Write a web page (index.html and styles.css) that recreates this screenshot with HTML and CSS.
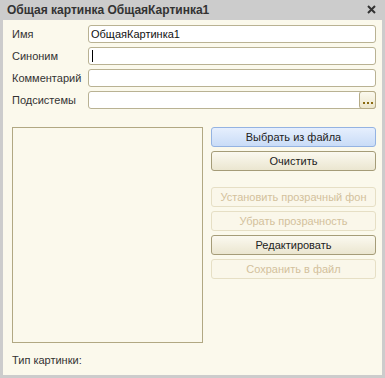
FILE: index.html
```html
<!DOCTYPE html>
<html>
    <head>
        <meta charset="utf-8" />
        <title>Общая картинка ОбщаяКартинка1</title>
        <link rel="stylesheet" href="styles.css">
    </head>

    <body>
        <div class="m-win">
            <div class="head">
                <span class="ttl">Общая картинка ОбщаяКартинка1</span>
                <svg class="close" width="9" height="9" viewBox="0 0 9 9">
                    <path d="M1 1L8 8M8 1L1 8" stroke="#333" stroke-width="2" fill="none" />
                </svg>
            </div>

            <div class="body">
                <div class="props">
                    <label>Имя</label>
                    <div class="fld">ОбщаяКартинка1</div>
                    <label>Синоним</label>
                    <div class="fld"><i class="caret"></i></div>
                    <label>Комментарий</label>
                    <div class="fld"></div>
                    <label>Подсистемы</label>
                    <div class="fld fld-sel">
                        <span class="val"></span>
                        <span class="more">
                            <svg width="11" height="3" viewBox="0 0 11 3">
                                <rect x="0" y="0" width="2" height="2" fill="#8a6a10" />
                                <rect x="4" y="0" width="2" height="2" fill="#8a6a10" />
                                <rect x="8" y="0" width="2" height="2" fill="#8a6a10" />
                            </svg>
                        </span>
                    </div>
                </div>

                <div class="pic">
                    <div class="view"></div>
                    <div class="btns">
                        <button class="btn btn-def">Выбрать из файла</button>
                        <button class="btn">Очистить</button>
                        <button class="btn gap" disabled>Установить прозрачный фон</button>
                        <button class="btn" disabled>Убрать прозрачность</button>
                        <button class="btn">Редактировать</button>
                        <button class="btn" disabled>Сохранить в файл</button>
                    </div>
                </div>

                <p class="type">Тип картинки:</p>
            </div>
        </div>
    </body>
</html>
```

FILE: styles.css
```css
*{margin:0;padding:0;box-sizing:border-box;}
body{background:#cccccc;font:11px "Liberation Sans",Arial,sans-serif;color:#333;}

.m-win{width:385px;height:378px;display:flex;flex-direction:column;background:#cccccc;}
.m-win .head{height:20px;display:flex;align-items:center;justify-content:space-between;padding:0 9px 1px 7px;}
.m-win .ttl{font-weight:bold;font-size:12px;color:#333;}
.m-win .close{display:block;}

.m-win .body{flex:1;margin:0 3px 3px;background:#fbf9ec;padding:5px 6px 0 9px;display:flex;flex-direction:column;}

.props{display:grid;grid-template-columns:76px 1fr;grid-auto-rows:18px;row-gap:4px;align-items:center;}
.props label{color:#333;white-space:nowrap;}
.props .fld{height:18px;border:1px solid #b9b293;border-radius:3px;background:#fff;padding:0 2px;line-height:16px;color:#111;display:flex;align-items:center;}
.props .caret{display:block;width:1px;height:12px;background:#000;margin-left:1px;}
.props .fld-sel{padding-right:0;}
.props .fld-sel .val{flex:1;}
.props .more{width:17px;height:18px;margin:-1px -1px -1px 0;border:1px solid #b5ab86;border-radius:3px;background:linear-gradient(#fbf9ee,#ece6cc);display:flex;align-items:flex-end;justify-content:center;padding:0 0 3px 1px;}
.props .more svg{display:block;}

.pic{display:flex;gap:8px;margin-top:18px;}
.pic .view{width:191px;height:216px;border:1px solid #b1a883;}
.pic .btns{flex:1;display:flex;flex-direction:column;gap:4px;}

.btn{height:20px;border:1px solid #a59c78;border-radius:3px;background:linear-gradient(#fbf9f0,#ebe6d0);font:11px "Liberation Sans",Arial,sans-serif;color:#222;}
.btn-def{border-color:#94b3e2;background:linear-gradient(#e6effd,#c9dcf7);}
.btn.gap{margin-top:12px;}
.btn[disabled]{border-color:#e6dfc5;background:#faf7ea;color:#d3c19c;}

.type{margin-top:11px;color:#333;}
```
